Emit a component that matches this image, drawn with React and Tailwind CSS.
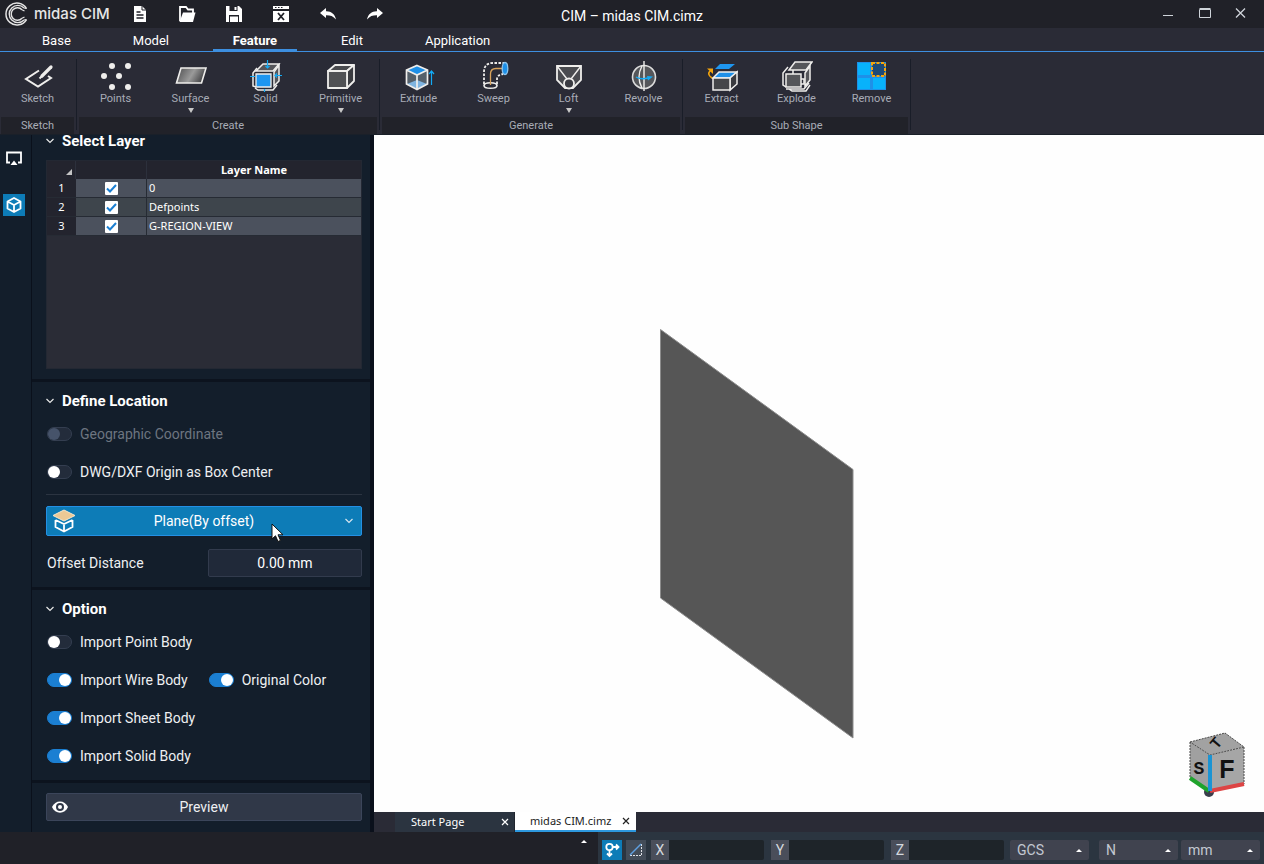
import React, { useState } from 'react';

const svgProps = { width: 32, height: 32, viewBox: '0 0 32 32', fill: 'none', 'aria-hidden': true };

function SketchIcon() {
  return (
    <svg {...svgProps} stroke="#efeeec" strokeWidth="2">
      <path d="M17 10.5L4 19l12 7.5L29 18l-3-2" />
      <path d="M20 16L29 7" strokeWidth="3.2" strokeLinecap="round" />
      <path d="M17.5 18.5l3-3" strokeWidth="2" />
    </svg>
  );
}

function PointsIcon() {
  return (
    <svg {...svgProps} fill="#efeeec">
      <circle cx="12" cy="6" r="3" />
      <circle cx="28" cy="6" r="3" />
      <circle cx="4" cy="16" r="3" />
      <circle cx="19" cy="16" r="3" />
      <circle cx="12" cy="27" r="3" />
      <circle cx="28" cy="27" r="3" />
    </svg>
  );
}

function SurfaceIcon() {
  return (
    <svg {...svgProps}>
      <defs>
        <linearGradient id="surface" x1="0" y1="0" x2="1" y2="0.3">
          <stop offset="0" stopColor="#4a4a4c" />
          <stop offset="0.6" stopColor="#9a9a9a" />
          <stop offset="1" stopColor="#4a4a4c" />
        </linearGradient>
      </defs>
      <path d="M6 8H31L26.500 23H1.500Z" fill="url(#surface)" stroke="#efeeec" strokeWidth="1.6" />
    </svg>
  );
}

function SolidIcon() {
  return (
    <svg {...svgProps}>
      <path d="M6 11L13 4H29L23 11Z" fill="#55565a" stroke="#efeeec" strokeWidth="1.5" />
      <path d="M24 12L29 5V21L24 26Z" fill="#55565a" stroke="#efeeec" strokeWidth="1.5" />
      <path d="M7 8L3 13V26L6 27M5 28l3 2h15l4-5" stroke="#efeeec" strokeWidth="1.5" />
      <path d="M6 14H21V27H6Z" fill="#1e96f0" stroke="#efeeec" strokeWidth="1.3" />
      <path d="M17.500 0V8M15.500 6l2 2 2-2M0 16.500H5M32 15.500H25M27 13.500l-2 2 2 2M14.500 32V29" stroke="#12aaf5" strokeWidth="1.2" />
    </svg>
  );
}

function PrimitiveIcon() {
  return (
    <svg {...svgProps} stroke="#efeeec" strokeWidth="1.8" strokeLinejoin="round">
      <path d="M3 11L10 5H29L22 11Z" fill="#4a4b4f" />
      <path d="M22 11L29 5V21L22 28Z" fill="#3a3b40" />
      <path d="M3 11H22V28H3Z" fill="#505154" />
    </svg>
  );
}

function ExtrudeIcon() {
  return (
    <svg {...svgProps}>
      <path d="M14 5.500L24.500 10V24L14 29.500L3.500 24V10Z" fill="#55606a" />
      <path d="M14 5.500L24.500 10L14 15L3.500 10Z" fill="#1e90e8" />
      <path d="M14 20L24 24L14 29L4 24Z" fill="#7fb4e0" />
      <path d="M14 5.500L24.500 10V24L14 29.500L3.500 24V10ZM3.500 10L14 15L24.500 10M14 15V29" stroke="#efeeec" strokeWidth="1.7" />
      <path d="M28.500 25V11M26 14l2.500-3 2.500 3" stroke="#12aaf5" strokeWidth="1.2" />
    </svg>
  );
}

function SweepIcon() {
  return (
    <svg {...svgProps}>
      <path d="M6 24V12Q6 3 15 3H26M19 24V19Q19 15 25 14" stroke="#efeeec" strokeWidth="1.8" strokeDasharray="2.500 1.500" />
      <ellipse cx="12.500" cy="25.500" rx="6.500" ry="2.800" stroke="#efeeec" strokeWidth="1.6" />
      <path d="M12.500 25V14Q12.500 8.500 18 8.500H27" stroke="#d9a35c" strokeWidth="1.3" />
      <ellipse cx="27" cy="8.500" rx="2.800" ry="6" fill="#1e90e8" stroke="#8cc4ee" strokeWidth="1.3" />
    </svg>
  );
}

function LoftIcon() {
  return (
    <svg {...svgProps} stroke="#efeeec" strokeWidth="1.8">
      <path d="M4 6H28V20L20 28H12L4 20Z" fill="#4a4b50" />
      <path d="M4 6L14 19M28 6L18 19" strokeWidth="1.4" />
      <circle cx="16" cy="23.500" r="5" fill="#3a3b42" />
    </svg>
  );
}

function RevolveIcon() {
  return (
    <svg {...svgProps}>
      <circle cx="16" cy="17" r="11.500" fill="#55565a" stroke="#dcdcdc" strokeWidth="1.6" />
      <path d="M14 6Q8 17 14 28M16 1V31" stroke="#efeeec" strokeWidth="1.4" />
      <path d="M8 17Q13 20 20 18" stroke="#12aaf5" strokeWidth="1.4" />
      <path d="M19 16l6 .5-5 4Z" fill="#12aaf5" />
    </svg>
  );
}

function ExtractIcon() {
  return (
    <svg {...svgProps}>
      <path d="M14 4H29L23 9H9Z" fill="#1e96f0" />
      <path d="M7 18L13 12H31L24 18Z" fill="#1e90e8" stroke="#efeeec" strokeWidth="1.5" />
      <path d="M24 18L31 12V24L24 30Z" fill="#3a3b40" stroke="#efeeec" strokeWidth="1.5" />
      <path d="M7 18H24V30H7Z" fill="#454649" stroke="#efeeec" strokeWidth="1.5" />
      <path d="M6 18Q0 14 5 10" stroke="#f5a50c" strokeWidth="1.6" />
      <path d="M1 8.500H7V14Z" fill="#f5a50c" />
    </svg>
  );
}

function ExplodeIcon() {
  return (
    <svg {...svgProps} stroke="#efeeec" strokeWidth="1.5">
      <path d="M8 10L14 2H31L25 10Z" fill="#55565a" />
      <path d="M24 13L29 6V20L24 26Z" fill="#55565a" />
      <path d="M7 7L2 13V25L5 27M5 29H23L28 23M12 10V14M8 29l3 2h14l4-6" />
      <path d="M5 14H20V27H5Z" fill="#55565a" />
      <path d="M20 19h3v5h-3" />
    </svg>
  );
}

function RemoveIcon() {
  return (
    <svg {...svgProps}>
      <path d="M1 2H30V30H1Z" fill="#1e90e8" />
      <path d="M2 3H14V15H2ZM2 18H14V29H2ZM17 18H29V29H17Z" fill="#08b2fb" />
      <path d="M16 3H29V16H16Z" fill="#1d4a78" stroke="#f5a50c" strokeWidth="2" strokeDasharray="3 1.500" />
    </svg>
  );
}

const menuTabs = ['Base', 'Model', 'Feature', 'Edit', 'Application'];

const ribbonGroups = [
  { name: 'Sketch', items: [{ label: 'Sketch', Icon: SketchIcon }] },
  {
    name: 'Create',
    items: [
      { label: 'Points', Icon: PointsIcon },
      { label: 'Surface', Icon: SurfaceIcon, menu: true },
      { label: 'Solid', Icon: SolidIcon },
      { label: 'Primitive', Icon: PrimitiveIcon, menu: true },
    ],
  },
  {
    name: 'Generate',
    items: [
      { label: 'Extrude', Icon: ExtrudeIcon },
      { label: 'Sweep', Icon: SweepIcon },
      { label: 'Loft', Icon: LoftIcon, menu: true },
      { label: 'Revolve', Icon: RevolveIcon },
    ],
  },
  {
    name: 'Sub Shape',
    items: [
      { label: 'Extract', Icon: ExtractIcon },
      { label: 'Explode', Icon: ExplodeIcon },
      { label: 'Remove', Icon: RemoveIcon },
    ],
  },
];

const quickActions = [
  {
    name: 'New',
    art: (
      <>
        <path d="M4 2h8l4 4v12H4Z" fill="#fff" />
        <path d="M6.500 8h4M6.500 11h7M6.500 14h7" stroke="#202128" strokeWidth="1.4" />
        <path d="M12 2v4h4" stroke="#202128" strokeWidth="1" fill="none" />
      </>
    ),
  },
  {
    name: 'Open',
    art: (
      <>
        <path d="M3 17V3h6l2 2.500h5V9" stroke="#fff" strokeWidth="1.8" fill="none" />
        <path d="M6 8.500h12.500L16 18H2.500Z" fill="#fff" />
      </>
    ),
  },
  {
    name: 'Save',
    art: (
      <>
        <path d="M2 2h13l3 3v13H2Z" fill="#fff" />
        <path d="M5.500 2h8v5h-8ZM5 11h10v7H5Z" fill="#202128" />
        <path d="M10.500 3h2v3h-2ZM6 12.500h8v5.500H6Z" fill="#fff" />
      </>
    ),
  },
  {
    name: 'Close',
    art: (
      <>
        <path d="M2 2h16v16H2Z" fill="#fff" />
        <path d="M2 6h16M7 9l6 7M13 9l-6 7" stroke="#202128" strokeWidth="1.8" />
        <path d="M4 3.500h1.500M7 3.500h1.500M10 3.500h1.500" stroke="#202128" strokeWidth="1.2" />
      </>
    ),
  },
  {
    name: 'Undo',
    art: <path d="M2 9l6-5v3.200C13 7 17 10 18 15.500 15 12 12 11.200 8 11.300V14Z" fill="#fff" />,
  },
  {
    name: 'Redo',
    art: <path d="M18 9l-6-5v3.200C7 7 3 10 2 15.500 5 12 8 11.200 12 11.300V14Z" fill="#fff" />,
  },
];

function TitleBar() {
  return (
    <header className="grid h-7 grid-cols-[1fr_auto_1fr] items-center bg-[#202128]">
      <div className="flex items-center pl-1">
        <svg width="26" height="26" viewBox="0 0 26 26" fill="none" stroke="#e4e4e4" aria-hidden="true">
          <path d="M22.500 7.500A11 11 0 1 0 22.500 18.500" strokeWidth="1.5" />
          <path d="M20 7A8.600 8.600 0 1 0 20 19" strokeWidth="1.4" />
          <path d="M18 8.800A6.200 6.200 0 1 0 18 17.200" strokeWidth="1.4" />
          <path d="M22.500 7.500L20 7M18 8.800L20.500 10M18 17.200L20.500 16M22.500 18.500L20 19" strokeWidth="1.2" />
        </svg>
        <span className="ml-1 w-[90px] whitespace-nowrap font-['Inter',sans-serif] text-[15px] font-medium leading-5 text-[#e6e6e6]">
          midas CIM
        </span>
        <div className="ml-[6px] flex gap-[27px]">
          {quickActions.map(({ name, art }) => (
            <button key={name} type="button" aria-label={name}>
              <svg width="20" height="20" viewBox="0 0 20 20" aria-hidden="true">{art}</svg>
            </button>
          ))}
        </div>
      </div>
      <h1 className="pt-1 text-[14px] leading-5 text-white">CIM – midas CIM.cimz</h1>
      <div className="flex justify-end gap-5 pr-4">
        <button type="button" aria-label="Minimize">
          <svg width="16" height="16" viewBox="0 0 16 16" aria-hidden="true"><path d="M3 9h10v1H3Z" fill="#cfd4da" /></svg>
        </button>
        <button type="button" aria-label="Maximize">
          <svg width="16" height="16" viewBox="0 0 16 16" fill="none" stroke="#cfd4da" aria-hidden="true"><path d="M3.500 3.500h11v8h-11ZM3.500 2.500h11" /></svg>
        </button>
        <button type="button" aria-label="Close window">
          <svg width="16" height="16" viewBox="0 0 16 16" fill="none" stroke="#cfd4da" strokeWidth="1.3" aria-hidden="true"><path d="M4 2.500l9 9M13 2.500l-9 9" /></svg>
        </button>
      </div>
    </header>
  );
}

function Ribbon() {
  return (
    <>
      <nav className="flex h-6 gap-[26px] border-b border-[#3d8fe0] bg-[#2a2b36] pl-6">
        {menuTabs.map((tab) => (
          <a
            key={tab}
            href="#ribbon"
            className={
              tab === 'Feature'
                ? 'w-[84px] border-b-2 border-[#3d8fe0] pt-1 text-center text-[13px] font-bold leading-[18px] text-white'
                : 'px-[18px] pt-1 text-[13px] leading-[18px] text-white'
            }
          >
            {tab}
          </a>
        ))}
      </nav>
      <div id="ribbon" className="flex h-[83px] border-b border-[#1a2029] bg-[#2a2b36]">
        {ribbonGroups.map((group) => (
          <section key={group.name} className="flex" aria-label={group.name}>
            <div className="flex flex-col px-px">
              <div className="-mx-px flex flex-1 pt-2">
                {group.items.map(({ label, Icon, menu }) => (
                  <button key={label} type="button" className="flex w-[75px] flex-col items-center text-[11px] leading-[14px] text-[#a8acb6]">
                    <Icon />
                    {label}
                    {menu && (
                      <svg className="mt-[2px]" width="6" height="5" viewBox="0 0 6 5" aria-hidden="true"><path d="M0 0h6L3 5Z" fill="#c8c8c8" /></svg>
                    )}
                  </button>
                ))}
              </div>
              <div className="bg-[#212229] pt-px text-center text-[11px] leading-4 text-[#a8acb6]">{group.name}</div>
            </div>
            <div className="mx-px mb-1 mt-[7px] w-px bg-[#191d28]" />
          </section>
        ))}
      </div>
    </>
  );
}

function SectionTitle({ children }) {
  return (
    <h2 className="flex items-center gap-2 text-[15px] font-bold leading-5 text-white">
      <svg width="8" height="6" viewBox="0 0 8 6" fill="none" stroke="#e8e8e8" strokeWidth="1.2" aria-hidden="true"><path d="M0.500 1L4 4.500 7.500 1" /></svg>
      {children}
    </h2>
  );
}

function Toggle({ label, checked, disabled, onChange }) {
  return (
    <label className={disabled ? 'flex items-center gap-2 text-[14px] leading-5 text-[#6d7580]' : 'flex items-center gap-2 text-[14px] leading-5 text-[#eef0f2]'}>
      <input
        type="checkbox"
        checked={checked}
        disabled={disabled}
        onChange={onChange}
        className="h-[14px] w-[25px] appearance-none rounded-full border border-[#343e50] bg-[#232c3b] before:block before:size-3 before:rounded-full before:bg-white checked:border-[#1b7fd2] checked:bg-[#1b7fd2] checked:before:ml-[11px] disabled:before:bg-[#46536a]"
      />
      {label}
    </label>
  );
}

const initialLayers = [
  { name: '0', on: true },
  { name: 'Defpoints', on: true },
  { name: 'G-REGION-VIEW', on: true },
];

function LayerTable() {
  const [layers, setLayers] = useState(initialLayers);

  const toggleLayer = (index) => {
    setLayers(layers.map((l, i) => (i === index ? { ...l, on: !l.on } : l)));
  };

  return (
    <div className="mt-[9px] h-[209px] border border-[#232833] bg-[#2a2c36]">
      <table className="w-full table-fixed border-separate border-spacing-0 font-['Noto_Sans',sans-serif] text-[11px] leading-[18px] text-white">
        <thead>
          <tr className="bg-[#23242e]">
            <th className="w-[29px] border-r border-[#2c303c] p-0">
              <svg className="ml-auto mr-[3px] mt-1" width="6" height="6" viewBox="0 0 6 6" aria-hidden="true"><path d="M6 0v6H0Z" fill="#c4c4c4" /></svg>
            </th>
            <th className="w-[71px] border-r border-[#2c303c] p-0" />
            <th className="p-0 font-bold">Layer Name</th>
          </tr>
        </thead>
        <tbody>
          {layers.map((layer, i) => (
            <tr key={layer.name} className="odd:bg-[#4b515d] even:bg-[#3e454c]">
              <th className="border-b border-[#262b34] bg-[#23242e] p-0 font-normal">{i + 1}</th>
              <td className="border-b border-r border-[#262b34] p-0">
                <div className="grid place-items-center">
                  <input
                    type="checkbox"
                    aria-label={`Layer ${layer.name}`}
                    checked={layer.on}
                    onChange={() => toggleLayer(i)}
                    className="col-start-1 row-start-1 size-[13px] appearance-none rounded-[1px] bg-white"
                  />
                  {layer.on && (
                    <svg className="pointer-events-none col-start-1 row-start-1" width="13" height="13" viewBox="0 0 13 13" fill="none" stroke="#1b7fd2" strokeWidth="2" aria-hidden="true">
                      <path d="M2 6.500l3 3 6-6.500" />
                    </svg>
                  )}
                </div>
              </td>
              <td className="border-b border-[#262b34] px-[2px] py-0">{layer.name}</td>
            </tr>
          ))}
        </tbody>
      </table>
    </div>
  );
}

function SidePanel() {
  const [options, setOptions] = useState({ origin: false, point: false, wire: true, color: true, sheet: true, solid: true });
  const flip = (key) => () => setOptions({ ...options, [key]: !options[key] });

  return (
    <aside className="flex w-[343px] shrink-0 flex-col border-l border-r-4 border-[#0a101b] bg-[#131e2b]">
      <section className="border-b-3 border-[#0c131e] pb-[10px] pl-[14px] pr-2">
        <div className="-mt-1"><SectionTitle>Select Layer</SectionTitle></div>
        <LayerTable />
      </section>

      <section className="border-b-3 border-[#0c131e] pb-[10px] pl-[14px] pr-2 pt-[9px]">
        <SectionTitle>Define Location</SectionTitle>
        <div className="mt-[13px] flex flex-col gap-[18px] pl-px">
          <Toggle label="Geographic Coordinate" checked={false} disabled />
          <Toggle label="DWG/DXF Origin as Box Center" checked={options.origin} onChange={flip('origin')} />
        </div>
        <hr className="mb-[11px] mt-3 border-[#2b3441]" />
        <div className="relative">
          <select
            aria-label="Location method"
            className="block h-[30px] w-full appearance-none rounded-[2px] border border-[#2490e4] bg-[#0d7cb7] text-center text-[14px] leading-5 text-white [text-align-last:center]"
          >
            <option>Plane(By offset)</option>
          </select>
          <svg className="pointer-events-none absolute left-[6px] top-[3px]" width="24" height="24" viewBox="0 0 24 24" fill="none" aria-hidden="true">
            <path d="M12 1L23 6.500L12 12L1 6.500Z" fill="#ecc995" stroke="#f6e6cc" strokeWidth="1" />
            <path d="M3.500 11v7l8.500 4.500 8.500-4.500v-7M3.500 11L12 15l8.500-4M12 15v7.500" stroke="#fff" strokeWidth="1.8" />
          </svg>
          <svg className="pointer-events-none absolute right-[9px] top-3" width="8" height="6" viewBox="0 0 8 6" fill="none" stroke="#d6e6f0" strokeWidth="1.2" aria-hidden="true"><path d="M0.500 1L4 4.500 7.500 1" /></svg>
          <svg className="pointer-events-none absolute left-[225px] top-[17px]" width="13" height="20" viewBox="0 0 13 20" aria-hidden="true">
            <path d="M1 1V16L4.500 12.800L7 18.500L9.500 17.400L7 11.800H12Z" fill="#fff" stroke="#111" strokeWidth="1" />
          </svg>
        </div>
        <div className="mt-[13px] flex items-center justify-between pl-px">
          <label htmlFor="offset" className="text-[14px] leading-5 text-[#eef0f2]">Offset Distance</label>
          <input id="offset" defaultValue="0.00 mm" className="h-7 w-[154px] rounded-[2px] border border-[#323b4d] bg-[#202939] text-center text-[14px] leading-5 text-white" />
        </div>
      </section>

      <section className="border-b-3 border-[#0c131e] pb-[14px] pl-[14px] pr-2 pt-[9px]">
        <SectionTitle>Option</SectionTitle>
        <div className="mt-[13px] flex flex-col gap-[18px] pl-px">
          <Toggle label="Import Point Body" checked={options.point} onChange={flip('point')} />
          <div className="flex gap-[21px]">
            <Toggle label="Import Wire Body" checked={options.wire} onChange={flip('wire')} />
            <Toggle label="Original Color" checked={options.color} onChange={flip('color')} />
          </div>
          <Toggle label="Import Sheet Body" checked={options.sheet} onChange={flip('sheet')} />
          <Toggle label="Import Solid Body" checked={options.solid} onChange={flip('solid')} />
        </div>
      </section>

      <div className="pb-[11px] pl-[14px] pr-2 pt-[10px]">
        <button type="button" className="grid h-7 w-full grid-cols-[1fr_auto_1fr] items-center rounded-[2px] border border-[#3b455a] bg-[#303848] px-[5px] text-[14px] leading-5 text-[#eef0f2]">
          <svg width="16" height="14" viewBox="0 0 16 14" aria-hidden="true">
            <path d="M0 7C3-.5 13-.5 16 7 13 14.500 3 14.500 0 7Z" fill="#fff" />
            <circle cx="8" cy="7" r="4" fill="#303848" />
            <circle cx="8" cy="7" r="2" fill="#fff" />
          </svg>
          Preview
        </button>
      </div>
    </aside>
  );
}

function ViewCube() {
  return (
    <svg className="absolute bottom-[14px] right-[17px]" width="60" height="67" viewBox="0 0 60 67" fill="none" aria-label="View cube">
      <circle cx="22" cy="61" r="5" fill="#3a3f4c" />
      <path d="M3 11L38 2L57 16L23 24Z" fill="#a2a2a2" />
      <path d="M3 11L23 24V60L3 47Z" fill="#a0a0a0" />
      <path d="M23 24L57 16V53L23 60Z" fill="#a6a6a6" />
      <path d="M3 11L38 2L57 16L23 24ZM3 11V47M57 16V53" stroke="#4a4a4a" strokeDasharray="2 1" />
      <path d="M3 47L22 60" stroke="#1fa32c" strokeWidth="4" />
      <path d="M23 60L57 53" stroke="#dd4444" strokeWidth="4" />
      <path d="M23 24V60" stroke="#1b94d4" strokeWidth="4" />
      <g fill="#111" fontFamily="Liberation Sans, sans-serif" fontWeight="bold" textAnchor="middle">
        <text x="12" y="43" fontSize="18" fontFamily="Liberation Mono, monospace">S</text>
        <text x="40" y="47" fontSize="25">F</text>
        <text x="0" y="5" fontSize="15" transform="translate(29 12) rotate(-50)">T</text>
      </g>
    </svg>
  );
}

function CloseTab({ label }) {
  return (
    <button type="button" aria-label={label}>
      <svg width="8" height="8" viewBox="0 0 8 8" fill="none" stroke="currentColor" strokeWidth="1.2" aria-hidden="true"><path d="M1 1l6 6M7 1L1 7" /></svg>
    </button>
  );
}

function Viewport() {
  return (
    <main className="flex min-w-0 flex-1 flex-col bg-[#2a2b36]">
      <div className="relative flex-1 overflow-hidden bg-[#fefefe]">
        <svg className="absolute left-[285px] top-[193px]" width="196" height="412" viewBox="0 0 196 412" aria-label="Model">
          <path d="M1.500 1.500L194 141.500V410L1.500 270Z" fill="#565656" stroke="#8c8c8c" />
        </svg>
        <ViewCube />
      </div>
      <div className="flex h-5 pl-[21px] font-['Noto_Sans',sans-serif] text-[11px] leading-5">
        <div className="flex w-[120px] items-center justify-between border-r border-[#20252e] bg-[#2b3440] pl-4 pr-[5px] text-white">
          <a href="#start">Start Page</a>
          <CloseTab label="Close Start Page" />
        </div>
        <div className="flex w-[121px] items-center justify-between border-b-2 border-[#2d98de] bg-white pl-[15px] pr-[6px] text-[#222]">
          <a href="#model">midas CIM.cimz</a>
          <CloseTab label="Close midas CIM.cimz" />
        </div>
      </div>
    </main>
  );
}

function UnitSelect({ label, value }) {
  return (
    <div className="grid w-[79px] items-center">
      <select aria-label={label} className="col-start-1 row-start-1 h-5 appearance-none rounded-[2px] bg-[#40434f] px-[7px] text-[14px] leading-5 text-[#c3c8d2]">
        <option>{value}</option>
      </select>
      <svg className="pointer-events-none col-start-1 row-start-1 mr-[7px] justify-self-end" width="6" height="3" viewBox="0 0 6 3" aria-hidden="true"><path d="M0 3h6L3 0Z" fill="#fff" /></svg>
    </div>
  );
}

function StatusBar() {
  return (
    <footer className="flex h-8 bg-[#202128]">
      <div className="flex flex-1 justify-end pr-[11px] pt-2">
        <svg width="6" height="3" viewBox="0 0 6 3" aria-hidden="true"><path d="M0 3h6L3 0Z" fill="#fff" /></svg>
      </div>
      <div className="flex items-center bg-[#2b3540] pl-1 pr-1 pt-1">
        <button type="button" aria-label="Snap" className="mr-1 bg-[#0d7cb7]">
          <svg width="20" height="20" viewBox="0 0 20 20" fill="none" stroke="#fff" strokeWidth="1.8" aria-hidden="true">
            <circle cx="7.500" cy="7" r="3.200" />
            <path d="M10.500 7H16M14 4.500L16.500 7 14 9.500M7.500 10v6M5 13.500L7.500 16 10 13.500" />
          </svg>
        </button>
        <button type="button" aria-label="Ortho" className="mr-[5px] bg-[#434c58]">
          <svg width="20" height="20" viewBox="0 0 20 20" fill="none" aria-hidden="true">
            <path d="M4 15.500H15.500V4" stroke="#dfe3e8" strokeDasharray="2 1" />
            <path d="M4 15L15 4" stroke="#5f9fe0" strokeWidth="1.500" />
          </svg>
        </button>
        {['X', 'Y', 'Z'].map((axis) => (
          <label key={axis} className="mr-[7px] flex h-5 text-[14px] leading-5 text-[#d4d8de] nth-of-type-3:mr-[6px]">
            <span className="w-[18px] bg-[#4a4e5a] text-center">{axis}</span>
            <input className="w-[95px] rounded-r-[2px] bg-[#1e2429] px-1" />
          </label>
        ))}
        <UnitSelect label="Coordinate system" value="GCS" />
        <div className="ml-[10px] flex gap-[3px]">
          <UnitSelect label="Force unit" value="N" />
          <UnitSelect label="Length unit" value="mm" />
        </div>
      </div>
    </footer>
  );
}

export default function App() {
  return (
    <div className="flex min-h-screen flex-col bg-[#202128] font-['Roboto',sans-serif]">
      <TitleBar />
      <Ribbon />
      <div className="flex flex-1">
        <nav className="flex w-[31px] shrink-0 flex-col items-start gap-[25px] bg-[#131e2b] pl-[3px] pt-3" aria-label="Panels">
          <button type="button" aria-label="Display">
            <svg width="22" height="22" viewBox="0 0 22 22" fill="none" aria-hidden="true">
              <path d="M7 15.500H4V5.500H18V15.500H15" stroke="#fff" strokeWidth="1.8" />
              <path d="M11 13.500l3.500 4.500h-7Z" fill="#fff" />
            </svg>
          </button>
          <button type="button" aria-label="Model" className="bg-[#0d7cb7]">
            <svg width="22" height="22" viewBox="0 0 22 22" fill="none" stroke="#fff" strokeWidth="1.8" strokeLinejoin="round" aria-hidden="true">
              <path d="M11 4L17.500 7.500V14.500L11 18L4.500 14.500V7.500ZM4.500 7.500L11 11l6.500-3.500M11 11v7" />
            </svg>
          </button>
        </nav>
        <SidePanel />
        <Viewport />
      </div>
      <StatusBar />
    </div>
  );
}
